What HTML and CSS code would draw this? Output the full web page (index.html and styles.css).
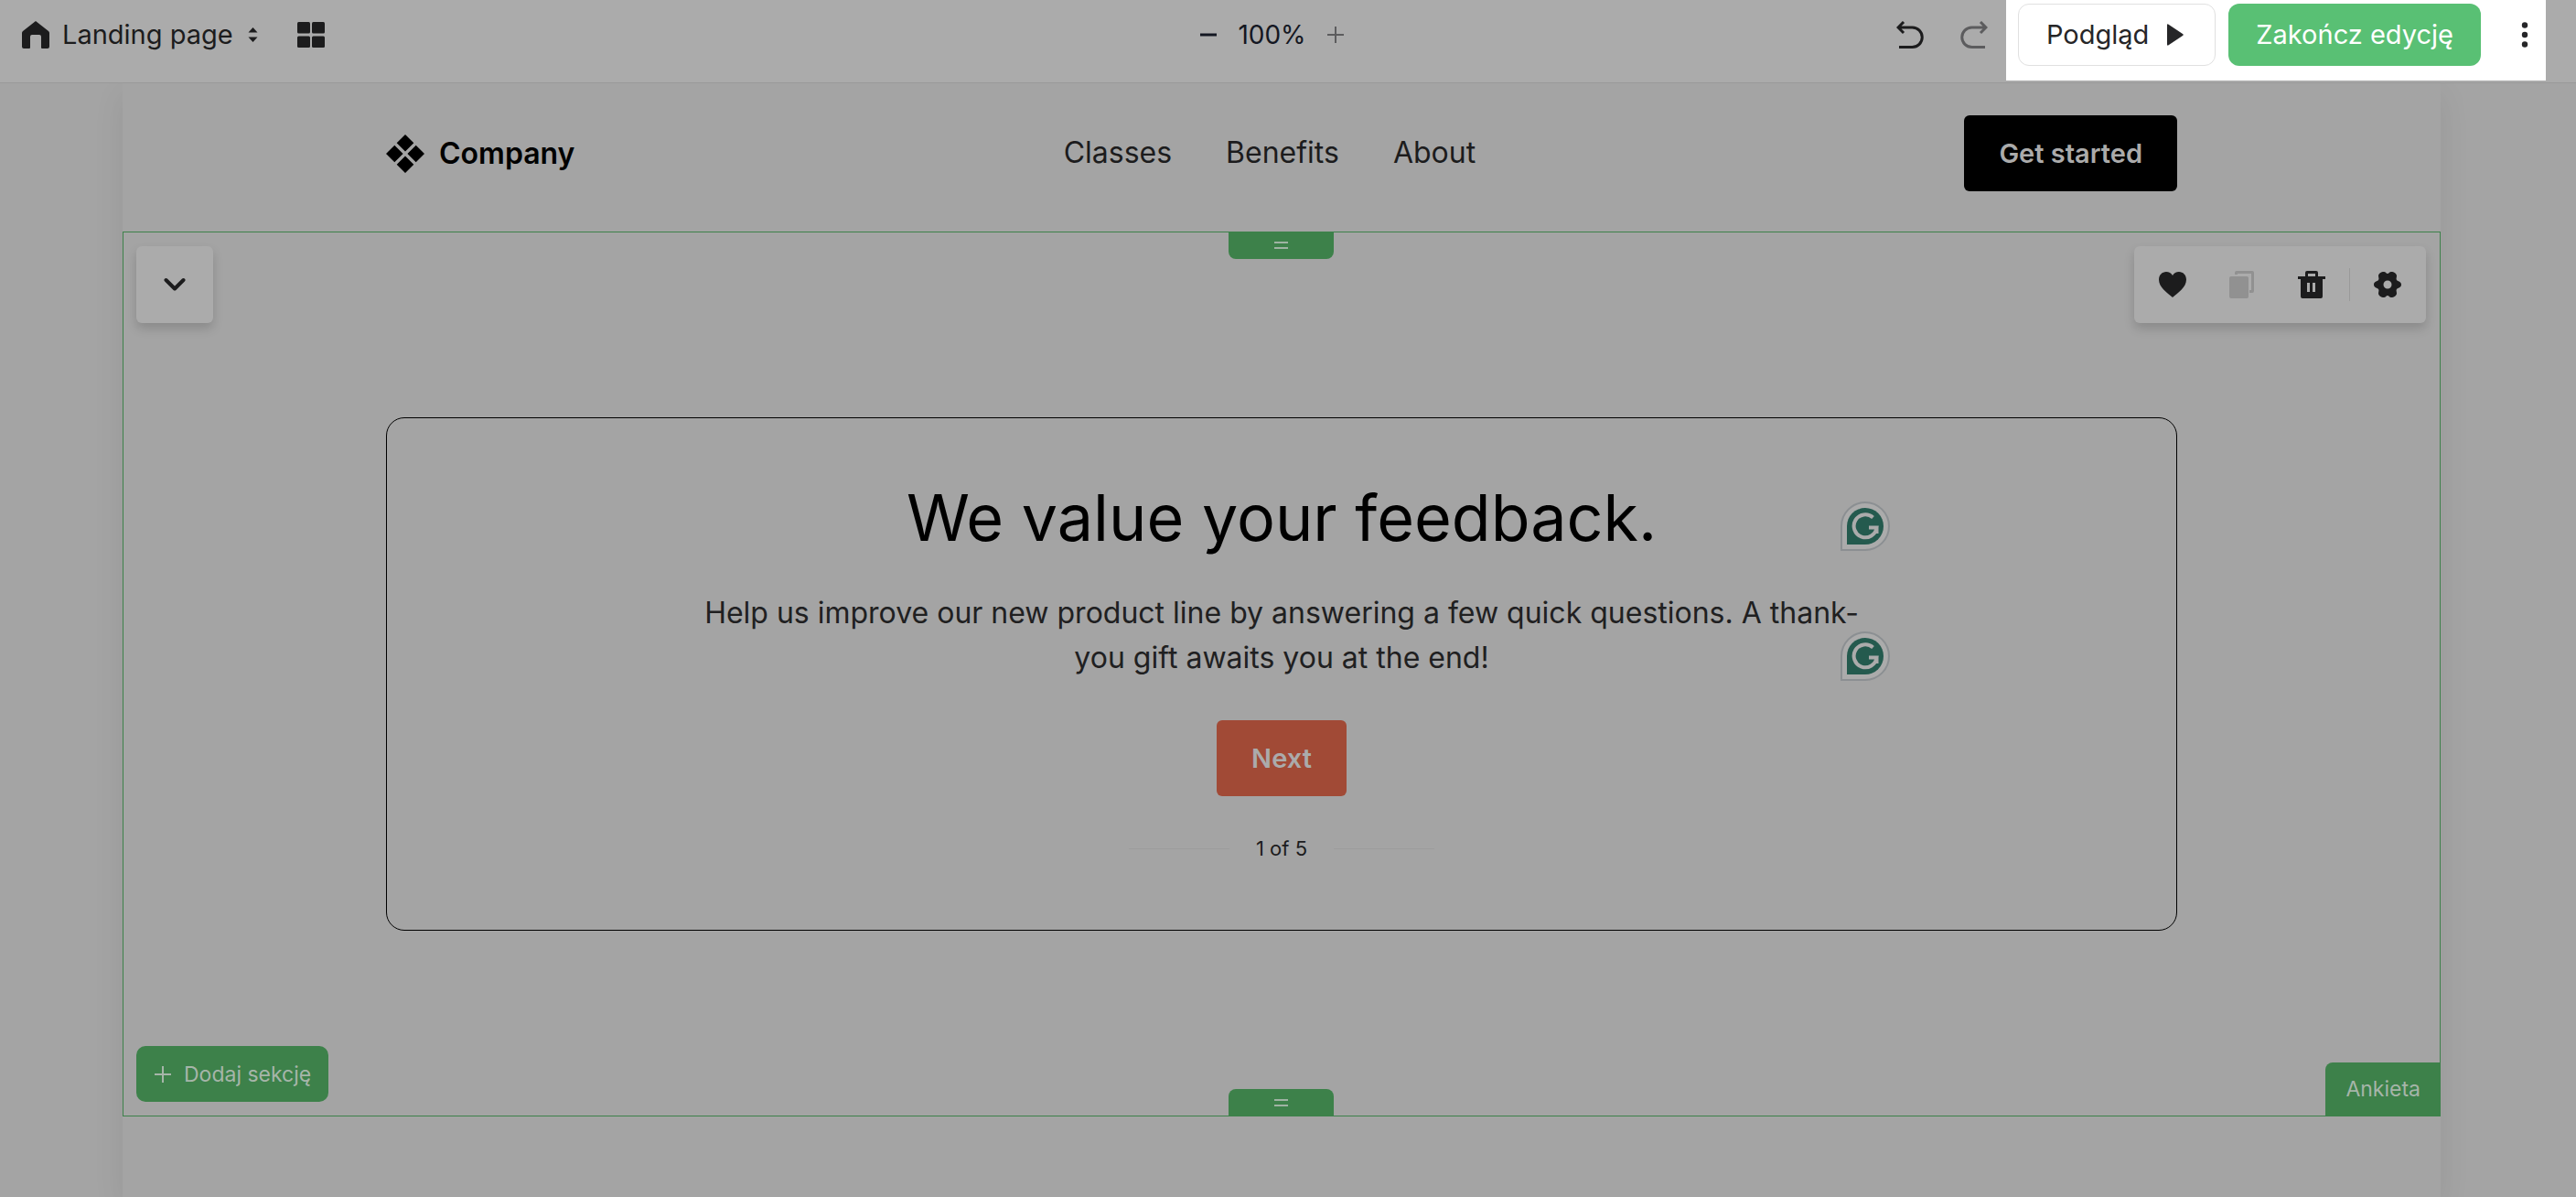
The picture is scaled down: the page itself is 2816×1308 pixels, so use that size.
FILE: index.html
```html
<!DOCTYPE html>
<html lang="pl">
<head>
  <meta charset="UTF-8" />
  <meta name="viewport" content="width=device-width, initial-scale=1.0" />
  <title>Landing page</title>
  <link rel="stylesheet" href="styles.css">
</head>
<body>
  <header class="toolbar">
    <div class="toolbar-left">
      <button class="page-picker">
        <svg width="30" height="30" viewBox="0 0 30 30"><path d="M15 0 29 11q1 1 1 2v15q0 2-2 2h-6q-1 0-1-1V17q0-2-2-2h-8q-2 0-2 2v12q0 1-1 1H2q-2 0-2-2V13q0-1 1-2z"/></svg>
        <span>Landing page</span>
        <svg width="13" height="16" viewBox="0 0 13 16"><path d="M7.500 0 12.500 5.500H2.500zM7.500 16 12.500 10.500H2.500z"/></svg>
      </button>
      <button class="icon-btn" aria-label="Sekcje">
        <svg width="30" height="28" viewBox="0 0 30 28"><rect width="14" height="12.500" rx="1.500"/><rect x="16" width="14" height="12.500" rx="1.500"/><rect y="15.500" width="14" height="12.500" rx="1.500"/><rect x="16" y="15.500" width="14" height="12.500" rx="1.500"/></svg>
      </button>
    </div>

    <div class="zoom">
      <button class="icon-btn" aria-label="Pomniejsz">
        <svg width="18" height="18" viewBox="0 0 18 18"><path d="M0 7.500h18v3H0z"/></svg>
      </button>
      <span>100%</span>
      <button class="icon-btn muted" aria-label="Powiększ">
        <svg width="18" height="18" viewBox="0 0 18 18"><path d="M0 8h8V0h2v8h8v2h-8v8H8v-8H0z"/></svg>
      </button>
    </div>

    <div class="toolbar-right">
      <div class="history">
        <button class="icon-btn" aria-label="Cofnij">
          <svg width="30" height="30" viewBox="0 0 30 30"><path class="stroke" d="M8 1 2 7l6 6M2 7h15.500a10.700 10.700 0 0 1 0 21.500H3"/></svg>
        </button>
        <button class="icon-btn muted" aria-label="Ponów">
          <svg width="30" height="30" viewBox="0 0 30 30"><path class="stroke" d="m22 1 6 6-6 6M28 7H12.500a10.700 10.700 0 0 0 0 21.500H27"/></svg>
        </button>
      </div>
      <div class="spotlight">
        <button class="btn-preview">
          Podgląd
          <svg width="18" height="24" viewBox="0 0 18 24"><path d="M0 1.500Q0-.5 2 1l15 10q1.500 1 0 2L2 23q-2 1.500-2-.5z"/></svg>
        </button>
        <button class="btn-finish">Zakończ edycję</button>
        <button class="icon-btn more" aria-label="Więcej">
          <svg width="8" height="28" viewBox="0 0 8 28"><circle cx="4" cy="3.500" r="3.200"/><circle cx="4" cy="14" r="3.200"/><circle cx="4" cy="24.500" r="3.200"/></svg>
        </button>
      </div>
    </div>
  </header>

  <main class="canvas">
    <div class="page">
      <div class="site-header">
        <a class="brand" href="#">
          <svg width="42" height="42" viewBox="0 0 42 42"><path d="m21 0 9.300 9.300L21 18.600l-9.300-9.300zM21 23.400l9.300 9.300L21 42l-9.300-9.300zM9.300 11.700l9.300 9.300-9.300 9.300L0 21zM32.700 11.700 42 21l-9.300 9.300-9.300-9.300z"/></svg>
          <span>Company</span>
        </a>
        <nav class="site-nav">
          <a href="#">Classes</a>
          <a href="#">Benefits</a>
          <a href="#">About</a>
        </nav>
        <button class="cta">Get started</button>
      </div>

      <section class="survey-section">
        <button class="handle handle-top" aria-label="Zmień wysokość od góry"></button>
        <button class="panel panel-collapse" aria-label="Zwiń">
          <svg width="24" height="16" viewBox="0 0 24 16"><path class="stroke thick" d="m2.500 3 9.500 9.500L21.500 3"/></svg>
        </button>
        <div class="panel panel-tools">
          <button class="icon-btn" aria-label="Ulubione">
            <svg width="30" height="30" viewBox="0 0 30 30"><path d="M15 29C9 24 0 18 0 9.500 0 4.500 3.600 1 8 1c3 0 5.500 1.500 7 4 1.500-2.500 4-4 7-4 4.400 0 8 3.500 8 8.500C30 18 21 24 15 29z"/></svg>
          </button>
          <button class="icon-btn disabled" aria-label="Duplikuj" disabled>
            <svg width="30" height="30" viewBox="0 0 30 30"><path d="M3 6h17q2 0 2 2v20q0 2-2 2H3q-2 0-2-2V8q0-2 2-2z"/><path d="M7 4V2q0-2 2-2h17q2 0 2 2v20q0 2-2 2h-3v-3h2V3H10v1z"/></svg>
          </button>
          <button class="icon-btn" aria-label="Usuń">
            <svg width="30" height="30" viewBox="0 0 30 30"><path fill-rule="evenodd" d="M8 6V2q0-2 2-2h10q2 0 2 2v4h8v3h-3v19q0 2-2 2H5q-2 0-2-2V9H0V6zM11 6h8V3h-8zM10 13v10h3V13zM16 13v10h3V13z"/></svg>
          </button>
          <span class="divider"></span>
          <button class="icon-btn" aria-label="Ustawienia">
            <svg width="30" height="30" viewBox="0 0 30 30"><path fill-rule="evenodd" d="M15 3c1.500 0 2-2 4-2 3 0 6 2 6 4.500 0 2-1 3 0 4.500s5 1.500 5 5-4 3.500-5 5 0 2.500 0 4.500c0 2.500-3 4.500-6 4.500-2 0-2.500-2-4-2s-2 2-4 2c-3 0-6-2-6-4.500 0-2 1-3 0-4.500s-5-1.500-5-5 4-3.500 5-5 0-2.500 0-4.500C5 3 8 1 11 1c2 0 2.500 2 4 2zm0 7.500a4.500 4.500 0 1 0 0 9 4.500 4.500 0 0 0 0-9z"/></svg>
          </button>
        </div>

        <div class="survey-card">
          <div class="field">
            <h1>We value your feedback.</h1>
            <svg class="checker" viewBox="0 0 54 54"><path class="checker-edge" d="M1 53V27a26 26 0 1 1 26 26z"/><path class="checker-fill" d="M7 47V27a20 20 0 1 1 20 20z"/><path class="checker-mark" d="M35.500 17.500A12.500 12.500 0 1 0 39.500 28.500H31M39.500 28.500V35"/></svg>
          </div>
          <div class="field">
            <p class="lead">Help us improve our new product line by answering a few quick questions. A thank-you gift awaits you at the end!</p>
            <svg class="checker" viewBox="0 0 54 54"><path class="checker-edge" d="M1 53V27a26 26 0 1 1 26 26z"/><path class="checker-fill" d="M7 47V27a20 20 0 1 1 20 20z"/><path class="checker-mark" d="M35.500 17.500A12.500 12.500 0 1 0 39.500 28.500H31M39.500 28.500V35"/></svg>
          </div>
          <button class="next">Next</button>
          <div class="progress">1 of 5</div>
        </div>

        <button class="add-section">
          <svg width="18" height="18" viewBox="0 0 18 18"><path d="M0 8h8V0h2v8h8v2h-8v8H8v-8H0z"/></svg>
          Dodaj sekcję
        </button>
        <span class="section-tag">Ankieta</span>
        <button class="handle handle-bottom" aria-label="Zmień wysokość od dołu"></button>
      </section>
    </div>
  </main>
</body>
</html>
```
FILE: styles.css
```css
* { box-sizing: border-box; }
body { margin: 0; min-height: 100vh; display: flex; flex-direction: column; background: #a4a4a4; color: #1c1c1d; font-family: Inter, "Liberation Sans", sans-serif; }
button { margin: 0; padding: 0; border: none; background: none; color: inherit; font: inherit; cursor: pointer; }
a { color: inherit; text-decoration: none; }
svg { display: block; flex: none; fill: currentColor; }
.stroke { fill: none; stroke: currentColor; stroke-width: 3; }
.thick { stroke-width: 4; stroke-linecap: round; stroke-linejoin: round; }

/* editor toolbar */
.toolbar { display: grid; grid-template-columns: 1fr auto 1fr; padding: 0 33px 2px 24px; background: #ababab; border-bottom: 1px solid #999; font-size: 29px; line-height: 36px; }
.toolbar-left, .zoom, .history { display: flex; align-items: center; height: 68px; margin-top: 4px; }
.toolbar-left { gap: 43px; }
.page-picker { display: flex; align-items: center; gap: 14px; }
.icon-btn { display: flex; align-items: center; justify-content: center; }
.muted { color: #5c5c5e; }
.zoom { gap: 23px; margin-right: 26px; color: #141722; font-size: 28px; }
.zoom .muted { color: #5c5c5e; }
.toolbar-right { display: flex; justify-content: flex-end; }
.history { gap: 40px; margin-right: 20px; }
.spotlight { display: flex; align-items: center; gap: 14px; padding: 4px 9px 16px 13px; background: #fff; color: #262628; }
.btn-preview, .btn-finish { height: 68px; border-radius: 12px; padding: 0 30px; }
.btn-preview { display: flex; align-items: center; gap: 20px; padding-right: 34px; border: 1px solid #e0e0e0; }
.btn-finish { background: #59c074; color: #fff; }
.more { width: 28px; margin-left: 20px; }

/* edited page */
.canvas { flex: 1; display: flex; padding: 0 148px 0 134px; }
.page { flex: 1; clip-path: inset(0 -60px); box-shadow: 0 12px 32px rgba(0, 0, 0, 0.08); background: #a4a4a4; }
.site-header { display: flex; align-items: center; justify-content: space-between; padding: 35px 288px 44px; font-size: 32px; line-height: 40px; }
.brand { display: flex; align-items: center; gap: 16px; color: #000; font-weight: 600; }
.site-nav { display: flex; gap: 59px; padding-bottom: 2px; }
.cta, .next { height: 83px; padding: 0 38px; border-radius: 6px; color: #ababab; font-size: 29px; font-weight: 600; }
.cta { background: #000; }

.survey-section { position: relative; padding: 202px 287px; border: 1px solid #3d814a; }
.handle { position: absolute; left: 50%; width: 115px; height: 30px; margin-left: -58px; background: #3d814a; display: flex; align-items: center; justify-content: center; }
.handle::before { content: ""; width: 15px; height: 4px; border: solid #9fb3a3; border-width: 2px 0; }
.handle-top { top: -1px; border-radius: 0 0 8px 8px; }
.handle-bottom { bottom: -1px; border-radius: 8px 8px 0 0; }
.panel { position: absolute; top: 15px; height: 84px; display: flex; align-items: center; justify-content: center; border-radius: 6px; background: #ababab; box-shadow: 0 6px 12px rgba(0, 0, 0, 0.16); }
.panel-collapse { left: 14px; width: 84px; }
.panel-tools { right: 15px; padding: 0 27px; gap: 46px; }
.divider { width: 1px; height: 36px; margin: 0 -20px; background: #999; }
.disabled { color: #919191; }

.survey-card { display: flex; flex-direction: column; align-items: center; padding: 65px 0 75px; border: 1px solid #000; border-radius: 20px; text-align: center; }
.field { position: relative; width: 100%; max-width: 1300px; }
h1 { margin: 0 0 35px; color: #000; font-size: 70px; font-weight: 400; line-height: 88px; }
.lead { margin: 0 0 44px; color: #202021; font-size: 32px; line-height: 49px; }
.checker { position: absolute; right: -15px; bottom: 43px; width: 54px; height: 54px; }
.checker-edge { fill: #ababab; stroke: #8b8f92; stroke-width: 2; }
.checker-fill { fill: #245a4e; }
.checker-mark { fill: none; stroke: #ababab; stroke-width: 4; }
.next { background: #a14a36; }
.progress { display: flex; align-items: center; gap: 29px; margin-top: 43px; font-size: 22px; line-height: 28px; }
.progress::before, .progress::after { content: ""; width: 110px; height: 1px; background: #9c9c9c; }

.add-section { position: absolute; left: 14px; bottom: 15px; height: 61px; display: flex; align-items: center; gap: 14px; padding: 0 19px 0 20px; border-radius: 10px; background: #3d814a; color: #a6b5a9; font-size: 23px; }
.section-tag { position: absolute; right: -1px; bottom: -1px; padding: 0 22px; border-radius: 8px 0 0 0; background: #3d814a; color: #a6b5a9; font-size: 23px; line-height: 59px; }
```
